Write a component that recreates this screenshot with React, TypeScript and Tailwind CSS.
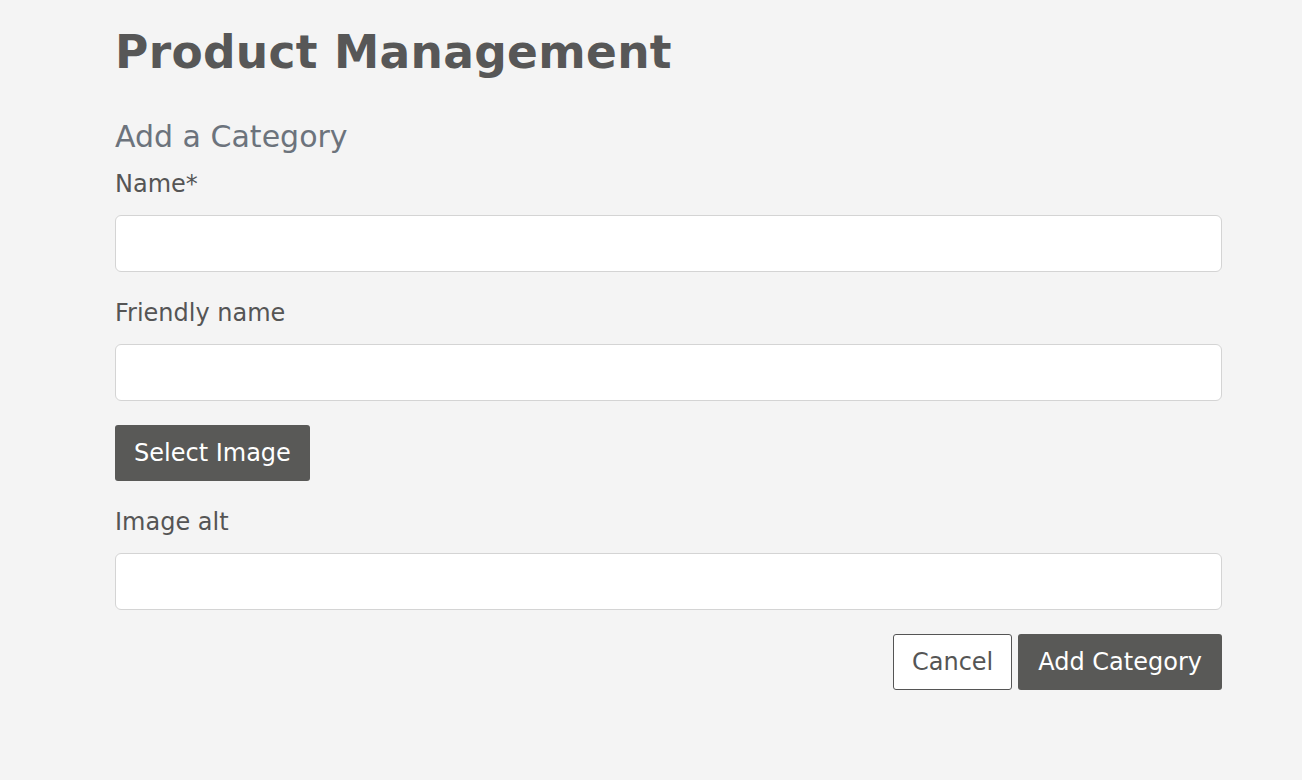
const Field = ({ label }: { label: string }) => (
  <div className="flex flex-col">
    <label className="mb-[14px] text-[24px] leading-[34px] text-[#555555]">{label}</label>
    <input
      type="text"
      className="h-[57px] w-full rounded-[6px] border border-[#d4d4d4] bg-white px-4 text-[22px] outline-none"
    />
  </div>
);

const App = () => {
  return (
    <div className="min-h-[780px] w-full bg-[#f4f4f4] font-['DejaVu_Sans',sans-serif]">
      <div className="ml-[115px] mr-[80px] flex flex-col pt-[23px]">
        <h1 className="text-[45.5px] font-bold leading-[60px] tracking-[0.3px] text-[#575757]">
          Product Management
        </h1>
        <h2 className="mt-[34px] mb-[10px] text-[30px] leading-[40px] text-[#6c737c]">Add a Category</h2>
        <form className="flex flex-col gap-[24px]">
          <Field label="Name*" />
          <Field label="Friendly name" />
          <div>
            <button
              type="button"
              className="h-[56px] rounded-[3px] bg-[#595957] px-[19px] text-[24px] text-white"
            >
              Select Image
            </button>
          </div>
          <Field label="Image alt" />
          <div className="flex justify-end gap-[6px]">
            <button
              type="button"
              className="h-[56px] rounded-[3px] border border-[#555555] bg-white px-[18px] text-[24px] text-[#555555]"
            >
              Cancel
            </button>
            <button
              type="submit"
              className="h-[56px] rounded-[3px] bg-[#595957] px-[20px] text-[24px] text-white"
            >
              Add Category
            </button>
          </div>
        </form>
      </div>
    </div>
  );
};

export default App;
